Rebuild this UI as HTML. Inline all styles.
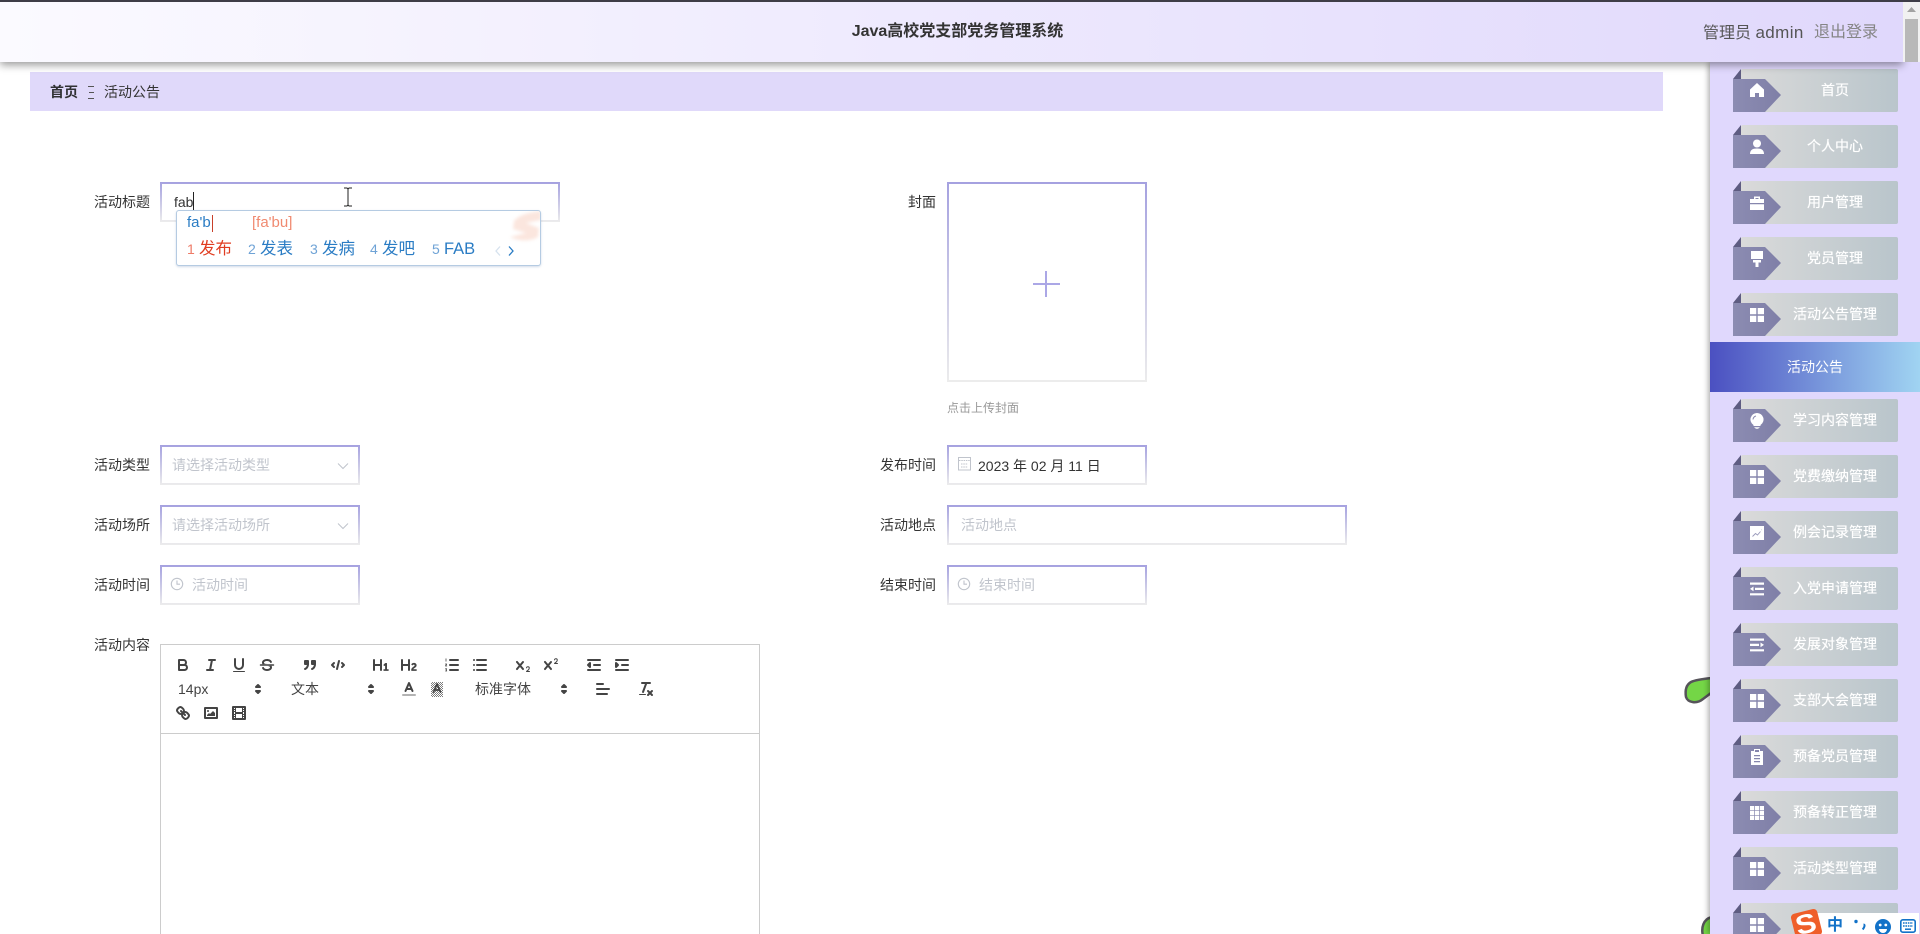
<!DOCTYPE html>
<html lang="zh-CN"><head><meta charset="utf-8"><title>Java高校党支部党务管理系统</title>
<style>
*{box-sizing:border-box}
html,body{margin:0;padding:0;width:1920px;height:934px;overflow:hidden;background:#fff;font-family:"Liberation Sans","Noto Sans CJK SC",sans-serif;font-size:14px;color:#333}
#root{position:relative;width:1920px;height:934px;overflow:hidden;background:#fff}
.a{position:absolute}
#top{left:0;top:0;width:1920px;height:2px;background:#3e3d47;z-index:6}
#hd{left:0;top:2px;width:1903px;height:60px;background:linear-gradient(90deg,#fbfaff,#e0d8fc);box-shadow:0 3px 8px rgba(0,0,0,.4);z-index:5}
#sb{left:1903px;top:2px;width:17px;height:60px;background:#f1f1f1;z-index:5}
#th{left:2px;top:17px;width:13px;height:43px;background:#b8b8b8}
#side{left:1710px;top:62px;width:210px;height:872px;background:#e0d8fd;box-shadow:-2px 0 5px rgba(0,0,0,.3);z-index:3}
.it{position:absolute;left:1733px;width:165px;height:43px;z-index:4}
.it .g{position:absolute;left:8px;top:0;width:157px;height:43px;border-radius:2px;background:linear-gradient(90deg,#dadada,#b9c5cb)}
.it .t{position:absolute;left:0;top:0}
.it .i{position:absolute;left:16px;top:14px;width:16px;height:16px}
.it span{position:absolute;left:0;width:204px;top:11px;line-height:20px;text-align:center;color:#fff;font-size:14px;text-shadow:0 0 .6px #fff}
#act{left:1710px;top:342px;width:210px;height:50px;background:linear-gradient(90deg,#4b50c1,#a0d4f2);color:#fff;text-align:center;line-height:50px;z-index:4}
#act b{font-weight:400;position:absolute;left:0;width:210px;text-align:center}
#bc{left:30px;top:72px;width:1633px;height:39px;background:#e0d9fa}
.l{position:absolute;width:100px;text-align:right;line-height:20px;color:#333}
.b{position:absolute;border:2px solid;border-image:linear-gradient(#a5a1e0,#ececec) 2;background:#fff;height:40px;width:200px}
.ph{position:absolute;line-height:20px;color:#c0c4cc}
.q{position:absolute;width:18px;height:18px;fill:none;stroke:#444;stroke-width:2;stroke-linecap:round;stroke-linejoin:round}
.q .f{fill:#444;stroke:none}
.q .ff{fill:#444}
.pk{position:absolute;line-height:20px;color:#444}
.ime{position:absolute;line-height:22px;white-space:nowrap}
</style></head><body>
<div id="root">
<svg width="0" height="0" style="position:absolute">
<defs>
<linearGradient id="tg" x1="0" x2="1" y1="0" y2="0"><stop offset="0" stop-color="#8c8cb2"/><stop offset="1" stop-color="#7f7fa7"/></linearGradient>
<symbol id="tab" viewBox="0 0 50 43"><polygon points="0,10 8,0 8,10" fill="#5e5c82"/><polygon points="0,10 32,10 48,26 32,43 0,43" fill="url(#tg)"/></symbol>
<symbol id="grid" viewBox="0 0 16 16"><path fill="#fff" d="M1 1h6.300v6.300H1zM8.700 1H15v6.300H8.700zM1 8.700h6.300V15H1zM8.700 8.700H15V15H8.700z"/></symbol>
<symbol id="home" viewBox="0 0 16 16"><path fill="#fff" d="M8 1 1 7.500V15h5v-4h4v4h5V7.500z"/></symbol>
<symbol id="user" viewBox="0 0 16 16"><circle cx="8" cy="4.500" r="4" fill="#fff"/><path fill="#fff" d="M1 15c0-4 2.500-5.500 7-5.500s7 1.500 7 5.500z"/></symbol>
<symbol id="case" viewBox="0 0 16 16"><path fill="#fff" d="M5 4V1.500h6V4h4v4H1V4zM6.500 3v1h3V3zM1 9.200h14V15H1z"/></symbol>
<symbol id="brush" viewBox="0 0 16 16"><path fill="#fff" d="M2 0h12v8H2zM4 9h8v2.500H9.500V16h-3v-4.500H4z"/></symbol>
<symbol id="bulb" viewBox="0 0 16 16"><path fill="#fff" d="M8 0a6.500 6.500 0 0 1 3.500 12v1h-7v-1A6.500 6.500 0 0 1 8 0zM5.500 14h5v.8h-5zM6.500 15.200h3v.8h-3z"/><path d="M4 6.500A4 4 0 0 1 7 3" stroke="#8a8aae" fill="none"/></symbol>
<symbol id="chart" viewBox="0 0 16 16"><path fill="#fff" d="M1 1h14v14H1z"/><path d="M3.500 11.500 6.500 8.500 8.500 10 11.500 6.500M12.500 5l.3-.3" stroke="#9a9abb" fill="none" stroke-width=".9"/></symbol>
<symbol id="list1" viewBox="0 0 16 16"><path fill="#fff" d="M1 1.500h14v2.200H1zM6 6.800h9V9H6zM1 12.200h14v2.200H1zM4.500 5.500v4.700L1 7.900z"/></symbol>
<symbol id="list2" viewBox="0 0 16 16"><path fill="#fff" d="M1 1.500h14v2.200H1zM1 6.800h9V9H1zM1 12.200h14v2.200H1zM11.500 5.500v4.700L15 7.900z"/></symbol>
<symbol id="clip" viewBox="0 0 16 16"><path fill="#fff" d="M5 0h6v2h3v14H2V2h3zM6 1v2h4V1zM5 6v1.300h6V6zM5 9v1.300h6V9zM5 12v1.300h6V12z" fill-rule="evenodd"/></symbol>
<symbol id="table" viewBox="0 0 16 16"><path fill="#fff" d="M1 1h4.200v4.200H1zM5.900 1h4.200v4.200H5.900zM10.800 1H15v4.200h-4.200zM1 5.900h4.200v4.200H1zM5.900 5.900h4.200v4.200H5.900zM10.800 5.900H15v4.200h-4.200zM1 10.800h4.200V15H1zM5.900 10.800h4.200V15H5.900zM10.800 10.800H15V15h-4.200z"/></symbol>
<symbol id="arrows" viewBox="0 0 18 18"><polygon points="7 11 9 13 11 11" fill="#444" stroke="#444" stroke-width="2" stroke-linejoin="round"/><polygon points="7 7 9 5 11 7" fill="#444" stroke="#444" stroke-width="2" stroke-linejoin="round"/></symbol>
<symbol id="clock" viewBox="0 0 14 14"><circle cx="7" cy="7" r="5.700" fill="none" stroke="#c0c4cc" stroke-width="1.100"/><path d="M7 3.500V7.200H10" fill="none" stroke="#c0c4cc" stroke-width="1.100"/></symbol>
<pattern id="dots" width="2" height="2" patternUnits="userSpaceOnUse"><rect width="1" height="1" fill="#444"/><rect x="1" y="1" width="1" height="1" fill="#444"/></pattern>
</defs></svg>

<div class="a" id="top"></div>
<div class="a" id="hd">
 <div class="a" style="left:0;width:1915px;top:20px;text-align:center;font-size:16px;font-weight:700;line-height:20px;color:#333">Java高校党支部党务管理系统</div>
 <div class="a" style="left:1703px;top:21px;font-size:16px;line-height:20px;color:#555;white-space:nowrap">管理员 <span style="font-size:17px;letter-spacing:.4px">admin</span></div>
 <div class="a" style="left:1814px;top:21px;font-size:16px;line-height:20px;color:#858585;white-space:nowrap">退出登录</div>
</div>
<div class="a" id="sb"><svg class="a" style="left:4px;top:5px" width="9" height="6"><polygon points="4.500,0 9,5 0,5" fill="#a3a3a3"/></svg><div class="a" id="th"></div></div>

<div class="a" id="bc"></div>
<div class="a" style="left:50px;top:82px;line-height:20px;font-weight:700;color:#303133;white-space:nowrap">首页</div>
<div class="a" style="left:88px;top:83px;width:6px;height:18px"><i class="a" style="left:0;top:3px;width:6px;height:1px;background:#555"></i><i class="a" style="left:1px;top:9px;width:5px;height:1px;background:#555"></i><i class="a" style="left:0;top:15px;width:6px;height:1px;background:#555"></i></div>
<div class="a" style="left:104px;top:82px;line-height:20px;color:#333;white-space:nowrap">活动公告</div>

<!-- left form -->
<div class="l" style="left:50px;top:192px">活动标题</div>
<div class="b" style="left:160px;top:182px;width:400px"></div>
<div class="a" style="left:174px;top:192px;line-height:20px;color:#333">fab</div>
<div class="a" style="left:193px;top:192px;width:1px;height:20px;background:#222"></div>
<svg class="a" style="left:341px;top:187px;z-index:2" width="14" height="20"><path d="M3 1h3l1 1 1-1h3M7 2v16M3 19h3l1-1 1 1h3" fill="none" stroke="#222" stroke-width="1"/></svg>

<div class="l" style="left:50px;top:455px">活动类型</div>
<div class="b" style="left:160px;top:445px"></div>
<div class="ph" style="left:172px;top:455px">请选择活动类型</div>
<svg class="a" style="left:337px;top:462px" width="12" height="8"><path d="M1 1.500 6 6.500 11 1.500" fill="none" stroke="#c0c4cc"/></svg>

<div class="l" style="left:50px;top:515px">活动场所</div>
<div class="b" style="left:160px;top:505px"></div>
<div class="ph" style="left:172px;top:515px">请选择活动场所</div>
<svg class="a" style="left:337px;top:522px" width="12" height="8"><path d="M1 1.500 6 6.500 11 1.500" fill="none" stroke="#c0c4cc"/></svg>

<div class="l" style="left:50px;top:575px">活动时间</div>
<div class="b" style="left:160px;top:565px"></div>
<svg class="a" style="left:170px;top:577px" width="14" height="14"><use href="#clock"/></svg>
<div class="ph" style="left:192px;top:575px">活动时间</div>

<!-- right form -->
<div class="l" style="left:836px;top:192px">封面</div>
<div class="b" style="left:947px;top:182px;height:200px"></div>
<div class="a" style="left:1033px;top:283px;width:27px;height:2px;background:#aba7e6"></div>
<div class="a" style="left:1045px;top:271px;width:2px;height:26px;background:#aba7e6"></div>
<div class="a" style="left:947px;top:399px;font-size:12px;line-height:18px;color:#999;white-space:nowrap">点击上传封面</div>

<div class="l" style="left:836px;top:455px">发布时间</div>
<div class="b" style="left:947px;top:445px"></div>
<svg class="a" style="left:958px;top:457px" width="13" height="14"><rect x=".5" y=".5" width="12" height="12.500" fill="none" stroke="#c0c4cc"/><path d="M1 3.500h11M3 7h7M3 10h7" stroke="#c0c4cc" stroke-dasharray="1.500 .8"/></svg>
<div class="a" style="left:978px;top:456px;line-height:20px;color:#333;white-space:nowrap">2023 年 02 月 11 日</div>

<div class="l" style="left:836px;top:515px">活动地点</div>
<div class="b" style="left:947px;top:505px;width:400px"></div>
<div class="ph" style="left:961px;top:515px">活动地点</div>

<div class="l" style="left:836px;top:575px">结束时间</div>
<div class="b" style="left:947px;top:565px"></div>
<svg class="a" style="left:957px;top:577px" width="14" height="14"><use href="#clock"/></svg>
<div class="ph" style="left:979px;top:575px">结束时间</div>

<!-- editor -->
<div class="l" style="left:50px;top:635px">活动内容</div>
<div class="a" style="left:160px;top:644px;width:600px;height:300px;border:1px solid #ccc"></div>
<div class="a" style="left:160px;top:733px;width:600px;height:1px;background:#ccc"></div>

<!-- row 1 -->
<svg class="q" style="left:174px;top:656px" viewBox="0 0 18 18"><path d="M5,4H9.500A2.500,2.500,0,0,1,12,6.500v0A2.500,2.500,0,0,1,9.500,9H5V4Z"/><path d="M5,9h5.500A2.500,2.500,0,0,1,13,11.500v0A2.500,2.500,0,0,1,10.500,14H5V9Z"/></svg>
<svg class="q" style="left:202px;top:656px" viewBox="0 0 18 18"><path d="M7 4h6M5 14h6M8 14 10 4"/></svg>
<svg class="q" style="left:230px;top:656px" viewBox="0 0 18 18"><path d="M5,3V9a4,4,0,0,0,4,4H9a4,4,0,0,0,4-4V3"/><rect class="f" height="1" rx=".5" width="12" x="3" y="15"/></svg>
<svg class="q" style="left:258px;top:656px" viewBox="0 0 18 18"><path d="M15.500 9h-13" stroke-width="1.500"/><path class="f" d="M9.007,8C6.542,7.791,6,7.519,6,6.500,6,5.792,7.283,5,9,5c1.571,0,2.765.679,2.969,1.309a1,1,0,0,0,1.900-.617C13.356,4.106,11.354,3,9,3,6.200,3,4,4.538,4,6.500a3.200,3.200,0,0,0,.500,1.843Z"/><path class="f" d="M8.984,10C11.457,10.208,12,10.479,12,11.500c0,.708-1.283,1.500-3,1.500-1.571,0-2.765-.679-2.969-1.309a1,1,0,1,0-1.900.617C4.644,13.894,6.646,15,9,15c2.800,0,5-1.538,5-3.500a3.200,3.200,0,0,0-.500-1.843Z"/></svg>
<svg class="q" style="left:301px;top:656px" viewBox="0 0 18 18"><rect class="ff" height="3" width="3" x="4" y="5"/><rect class="ff" height="3" width="3" x="11" y="5"/><path d="M7,8c0,4.031-3,5-3,5"/><path d="M14,8c0,4.031-3,5-3,5"/></svg>
<svg class="q" style="left:329px;top:656px" viewBox="0 0 18 18"><polyline points="5 7 3 9 5 11"/><polyline points="13 7 15 9 13 11"/><line x1="10" x2="8" y1="5" y2="13"/></svg>
<svg class="q" style="left:372px;top:656px" viewBox="0 0 18 18"><path class="f" d="M10,4V14a1,1,0,0,1-2,0V10H3v4a1,1,0,0,1-2,0V4A1,1,0,0,1,3,4V8H8V4a1,1,0,0,1,2,0Zm6.068,9.209H14.990V7.599a.541.541,0,0,0-.605-.605h-.627a1.011,1.011,0,0,0-.748.297L11.645,8.566a.544.544,0,0,0-.022.858l.286.308a.539.539,0,0,0,.847.033l.099-.088a1.214,1.214,0,0,0,.242-.353h.022s-.011.309-.011.605V13.209H12.041a.541.541,0,0,0-.605.605v.439a.541.541,0,0,0,.605.605h4.027a.541.541,0,0,0,.605-.605v-.439A.541.541,0,0,0,16.068,13.209Z"/></svg>
<svg class="q" style="left:400px;top:656px" viewBox="0 0 18 18"><path class="f" d="M16.740,13.814v.439a.541.541,0,0,1-.605.605H11.855a.584.584,0,0,1-.649-.605V14.013c0-2.905,3.399-3.422,3.399-4.555a.777.777,0,0,0-.847-.781,1.177,1.177,0,0,0-.836.385c-.275.264-.561.374-.858.132l-.429-.341c-.308-.242-.385-.518-.154-.814a2.972,2.972,0,0,1,2.454-1.177,2.454,2.454,0,0,1,2.684,2.409c0,2.453-3.179,2.927-3.278,3.938h2.794A.541.541,0,0,1,16.740,13.814ZM9,3A1,1,0,0,0,8,4V8H3V4A1,1,0,0,0,1,4V14a1,1,0,0,0,2,0V10H8v4a1,1,0,0,0,2,0V4A1,1,0,0,0,9,3Z"/></svg>
<svg class="q" style="left:443px;top:656px" viewBox="0 0 18 18"><path d="M7 4h8M7 9h8M7 14h8"/><path d="M3 2.800v2.400M2.400 8h1.300l-1.200 2h1.300M2.500 12.800h1.200l-.6 1 .6 1.200H2.500" stroke-width=".8"/></svg>
<svg class="q" style="left:471px;top:656px" viewBox="0 0 18 18"><path d="M6 4h9M6 9h9M6 14h9M3 4h0M3 9h0M3 14h0"/></svg>
<svg class="q" style="left:514px;top:656px" viewBox="0 0 18 18"><path class="f" d="M9.650,5.241a1,1,0,0,0-1.409.108L6,7.964,3.759,5.349A1,1,0,0,0,2.192,6.592L2.241,6.651,4.684,9.500,2.241,12.350A1,1,0,0,0,3.710,13.707L3.759,13.650,6,11.036,8.241,13.650a1,1,0,1,0,1.567-1.243L9.759,12.350,7.316,9.500,9.759,6.651A1,1,0,0,0,9.650,5.241Z"/><path class="f" d="M15.500,15H13.861a3.858,3.858,0,0,0,1.914-2.975,1.800,1.800,0,0,0-1.600-1.751A1.921,1.921,0,0,0,12.021,11.700a.5.500,0,1,0,.957.291.914.914,0,0,1,1.053-.725.810.810,0,0,1,.744.762c0,1.076-1.170,1.870-1.940,2.431A1.456,1.456,0,0,0,12,15.500a.5.500,0,0,0,.5.500h3A.5.500,0,0,0,15.500,15Z"/></svg>
<svg class="q" style="left:542px;top:656px" viewBox="0 0 18 18"><path class="f" d="M9.650,5.241a1,1,0,0,0-1.409.108L6,7.964,3.759,5.349A1,1,0,0,0,2.192,6.592L2.241,6.651,4.684,9.500,2.241,12.350A1,1,0,0,0,3.710,13.707L3.759,13.650,6,11.036,8.241,13.650a1,1,0,1,0,1.567-1.243L9.759,12.350,7.316,9.500,9.759,6.651A1,1,0,0,0,9.650,5.241Z"/><path class="f" d="M15.500,7H13.861a4.015,4.015,0,0,0,1.914-2.975,1.800,1.800,0,0,0-1.600-1.751A1.922,1.922,0,0,0,12.021,3.700a.5.500,0,1,0,.957.291.917.917,0,0,1,1.053-.725.810.810,0,0,1,.744.762c0,1.077-1.164,1.925-1.934,2.486A1.423,1.423,0,0,0,12,7.500a.5.500,0,0,0,.5.500h3A.5.500,0,0,0,15.500,7Z"/></svg>
<svg class="q" style="left:585px;top:656px" viewBox="0 0 18 18"><path d="M3 14h12M3 4h12M9 9h6"/><polygon class="ff" points="5 7 5 11 3 9 5 7"/></svg>
<svg class="q" style="left:613px;top:656px" viewBox="0 0 18 18"><path d="M3 14h12M3 4h12M9 9h6"/><polygon class="ff" points="3 7 3 11 5 9 3 7"/></svg>

<!-- row 2 -->
<div class="pk" style="left:178px;top:679px">14px</div>
<svg class="a" style="left:249px;top:680px" width="18" height="18"><use href="#arrows"/></svg>
<div class="pk" style="left:291px;top:679px">文本</div>
<svg class="a" style="left:362px;top:680px" width="18" height="18"><use href="#arrows"/></svg>
<svg class="q" style="left:400px;top:680px" viewBox="0 0 18 18"><path d="M3 15h12" stroke="#b3b3b3"/><path d="M5.500 11 9 3 12.500 11M11.630 9H6.380"/></svg>
<svg class="q" style="left:428px;top:680px" viewBox="0 0 18 18"><rect x="3" y="2" width="12" height="15" fill="url(#dots)" stroke="none" opacity=".7"/><path d="M5.500 12 9 4 12.500 12M11.630 10H6.380" stroke-width="1.700"/></svg>
<div class="pk" style="left:475px;top:679px">标准字体</div>
<svg class="a" style="left:555px;top:680px" width="18" height="18"><use href="#arrows"/></svg>
<svg class="q" style="left:594px;top:680px" viewBox="0 0 18 18"><path d="M3 4h6M3 9h12M3 14h10"/></svg>
<svg class="q" style="left:637px;top:680px" viewBox="0 0 18 18"><path d="M5 3h8M6 12 9.350 3M11 11l4 4M15 11l-4 4"/><rect class="f" height="1" rx=".5" width="7" x="2" y="14"/></svg>

<!-- row 3 -->
<svg class="q" style="left:174px;top:704px" viewBox="0 0 18 18"><line x1="7" x2="11" y1="7" y2="11"/><path d="M8.900,4.577a3.476,3.476,0,0,1,.36,4.679A3.476,3.476,0,0,1,4.577,8.900C3.185,7.500,2.035,6.400,4.217,4.217S7.500,3.185,8.900,4.577Z"/><path d="M13.423,9.100a3.476,3.476,0,0,0-4.679-.36,3.476,3.476,0,0,0,.36,4.679c1.392,1.392,2.500,2.542,4.679.36S14.815,10.500,13.423,9.100Z"/></svg>
<svg class="q" style="left:202px;top:704px" viewBox="0 0 18 18"><rect height="10" width="12" x="3" y="4"/><circle class="f" cx="6" cy="7" r="1"/><polyline class="f" points="5 12 5 11 7 9 8 10 11 7 13 9 13 12 5 12"/></svg>
<svg class="q" style="left:230px;top:704px" viewBox="0 0 18 18"><rect height="12" width="12" x="3" y="3"/><path class="f" d="M5 3h1v12H5zM12 3h1v12h-1zM5 8h8v2H5zM3 5h3v1H3zM3 7h3v1H3zM3 10h3v1H3zM3 12h3v1H3zM12 5h3v1h-3zM12 7h3v1h-3zM12 10h3v1h-3zM12 12h3v1h-3z"/></svg>

<!-- green blobs -->
<svg class="a" style="left:1680px;top:672px;z-index:2" width="40" height="36"><path d="M32 6C22 7 15 8 11 10 6 13 5 19 6 25 8 31 17 32 23 27L35 18V6Z" fill="#74d646" stroke="#56545a" stroke-width="2.500"/></svg>
<svg class="a" style="left:1698px;top:914px;z-index:2" width="20" height="20"><path d="M5 22C3 14 5 5 14 3L18 3 18 22Z" fill="#74d646" stroke="#56545a" stroke-width="2.500"/></svg>

<!-- sidebar -->
<div class="a" id="side"></div>
<div class="it" style="top:69px"><div class="g"></div><svg class="t" width="50" height="43"><use href="#tab"/></svg><svg class="i" style="top:13px"><use href="#home"/></svg><span>首页</span></div>
<div class="it" style="top:125px"><div class="g"></div><svg class="t" width="50" height="43"><use href="#tab"/></svg><svg class="i"><use href="#user"/></svg><span>个人中心</span></div>
<div class="it" style="top:181px"><div class="g"></div><svg class="t" width="50" height="43"><use href="#tab"/></svg><svg class="i"><use href="#case"/></svg><span>用户管理</span></div>
<div class="it" style="top:237px"><div class="g"></div><svg class="t" width="50" height="43"><use href="#tab"/></svg><svg class="i"><use href="#brush"/></svg><span>党员管理</span></div>
<div class="it" style="top:293px"><div class="g"></div><svg class="t" width="50" height="43"><use href="#tab"/></svg><svg class="i"><use href="#grid"/></svg><span>活动公告管理</span></div>
<div class="a" id="act"><b>活动公告</b></div>
<div class="it" style="top:399px"><div class="g"></div><svg class="t" width="50" height="43"><use href="#tab"/></svg><svg class="i"><use href="#bulb"/></svg><span>学习内容管理</span></div>
<div class="it" style="top:455px"><div class="g"></div><svg class="t" width="50" height="43"><use href="#tab"/></svg><svg class="i"><use href="#grid"/></svg><span>党费缴纳管理</span></div>
<div class="it" style="top:511px"><div class="g"></div><svg class="t" width="50" height="43"><use href="#tab"/></svg><svg class="i"><use href="#chart"/></svg><span>例会记录管理</span></div>
<div class="it" style="top:567px"><div class="g"></div><svg class="t" width="50" height="43"><use href="#tab"/></svg><svg class="i"><use href="#list1"/></svg><span>入党申请管理</span></div>
<div class="it" style="top:623px"><div class="g"></div><svg class="t" width="50" height="43"><use href="#tab"/></svg><svg class="i"><use href="#list2"/></svg><span>发展对象管理</span></div>
<div class="it" style="top:679px"><div class="g"></div><svg class="t" width="50" height="43"><use href="#tab"/></svg><svg class="i"><use href="#grid"/></svg><span>支部大会管理</span></div>
<div class="it" style="top:735px"><div class="g"></div><svg class="t" width="50" height="43"><use href="#tab"/></svg><svg class="i"><use href="#clip"/></svg><span>预备党员管理</span></div>
<div class="it" style="top:791px"><div class="g"></div><svg class="t" width="50" height="43"><use href="#tab"/></svg><svg class="i"><use href="#table"/></svg><span>预备转正管理</span></div>
<div class="it" style="top:847px"><div class="g"></div><svg class="t" width="50" height="43"><use href="#tab"/></svg><svg class="i"><use href="#grid"/></svg><span>活动类型管理</span></div>
<div class="it" style="top:903px"><div class="g"></div><svg class="t" width="50" height="43"><use href="#tab"/></svg><svg class="i"><use href="#grid"/></svg></div>

<!-- IME candidate popup -->
<div class="a" style="left:176px;top:210px;width:365px;height:56px;background:#fff;border:1px solid #b5cbe2;border-radius:3px;box-shadow:0 1px 2px rgba(120,150,190,.35);z-index:7;overflow:hidden">
 <svg class="a" style="left:325px;top:0;filter:blur(1.500px)" width="40" height="34"><path d="M12 10C18 3 30 1 39 0V9L24 12 37 17 36 26C28 31 16 30 8 26L24 22 11 18Z" fill="#f9d5c8" opacity=".6"/></svg>
 <div class="ime" style="left:10px;top:1px;font-size:15px;color:#2a7cc4">fa'b</div>
 <div class="a" style="left:35px;top:4px;width:1px;height:17px;background:#c8402a"></div>
 <div class="ime" style="left:75px;top:1px;font-size:15px;color:#f08a70">[fa'bu]</div>
 <div class="ime" style="left:10px;top:27px;font-size:14px;color:#ee7a66">1</div>
 <div class="ime" style="left:22px;top:27px;font-size:16.500px;color:#e03c20">发布</div>
 <div class="ime" style="left:71px;top:27px;font-size:14px;color:#6fa3d6">2</div>
 <div class="ime" style="left:83px;top:27px;font-size:16.500px;color:#2a7cc4">发表</div>
 <div class="ime" style="left:133px;top:27px;font-size:14px;color:#6fa3d6">3</div>
 <div class="ime" style="left:145px;top:27px;font-size:16.500px;color:#2a7cc4">发病</div>
 <div class="ime" style="left:193px;top:27px;font-size:14px;color:#6fa3d6">4</div>
 <div class="ime" style="left:205px;top:27px;font-size:16.500px;color:#2a7cc4">发吧</div>
 <div class="ime" style="left:255px;top:27px;font-size:14px;color:#6fa3d6">5</div>
 <div class="ime" style="left:267px;top:27px;font-size:16.500px;color:#2a7cc4">FAB</div>
 <svg class="a" style="left:316px;top:34px" width="30" height="12"><path d="M7 1.500 3 6 7 10.500" fill="none" stroke="#d6e2ee" stroke-width="1.300"/><path d="M16 1.500 20 6 16 10.500" fill="none" stroke="#2a7cc4" stroke-width="1.300"/></svg>
</div>

<!-- Sogou status bar -->
<div class="a" style="left:1816px;top:913px;width:103px;height:21px;background:#fff;z-index:8"></div>
<div class="a" style="left:1793px;top:911px;width:27px;height:27px;background:#ef5f2a;border-radius:4px;transform:rotate(-14deg);z-index:9;color:#fff;font:700 27px/26px 'Liberation Sans',sans-serif;text-align:center"><span style="display:inline-block;transform:scaleX(1.150)">S</span></div>
<div class="a" style="left:1827px;top:916px;font-size:16px;font-weight:700;line-height:20px;color:#1272c8;z-index:9">中</div>
<svg class="a" style="left:1852px;top:918px;z-index:9" width="16" height="16"><circle cx="4" cy="3.500" r="1.700" fill="#1272c8"/><path d="M11.500 6.500c1.500 0 1.500 2-.8 5" fill="none" stroke="#1272c8" stroke-width="2"/></svg>
<svg class="a" style="left:1875px;top:919px;z-index:9" width="16" height="16"><circle cx="8" cy="8" r="8" fill="#1272c8"/><circle cx="5.200" cy="6" r="1.400" fill="#fff"/><circle cx="10.800" cy="6" r="1.400" fill="#fff"/><path d="M4 10h8a4 4 0 0 1-8 0z" fill="#fff"/></svg>
<svg class="a" style="left:1900px;top:919px;z-index:9" width="16" height="14"><rect x=".8" y=".8" width="14.400" height="12.400" rx="2" fill="none" stroke="#1272c8" stroke-width="1.600"/><path d="M3 4h10M3 7h10" stroke="#1272c8" stroke-width="1.500" stroke-dasharray="1.600 .8"/><path d="M5 10.200h6" stroke="#1272c8" stroke-width="1.500"/></svg>
</div>
</body></html>
